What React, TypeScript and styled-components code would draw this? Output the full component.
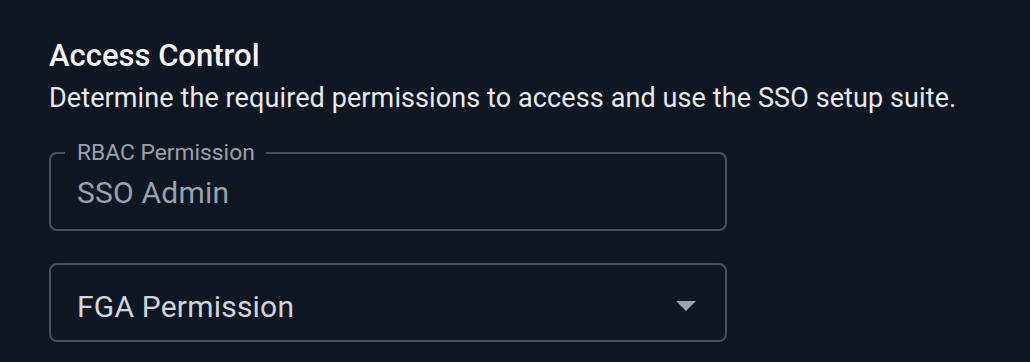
import React from 'react';
import styled, { createGlobalStyle } from 'styled-components';

const GlobalStyle = createGlobalStyle`
  html, body {
    margin: 0;
    padding: 0;
    background: #111722;
  }
  body {
    font-family: Roboto, 'Liberation Sans', sans-serif;
  }
`;

const Page = styled.div`
  width: 1030px;
  height: 362px;
  box-sizing: border-box;
  padding: 38px 0 0 49px;
  background: #111722;
  overflow: hidden;
`;

const Title = styled.h2`
  margin: 0;
  font-size: 31px;
  font-weight: 500;
  line-height: 36px;
  color: #f3f4f6;
`;

const Description = styled.p`
  margin: 7px 0 0;
  font-size: 27px;
  line-height: 34px;
  color: #e8eaee;
  letter-spacing: 0.1px;
`;

const Fields = styled.div`
  display: flex;
  flex-direction: column;
  gap: 32px;
  margin-top: 37px;
  width: 678px;
`;

const Field = styled.div<{ $offset?: number }>`
  position: relative;
  height: 79px;
  box-sizing: border-box;
  border: 2px solid #4a505c;
  border-radius: 8px;
  padding: ${(p) => p.$offset ?? 0}px 29px 0 26px;
  display: flex;
  align-items: center;
  justify-content: space-between;
`;

// floating label sitting on the top border (notched outline)
const Label = styled.span`
  position: absolute;
  top: -13px;
  left: 14px;
  padding: 0 11px 0 12px;
  background: #111722;
  font-size: 22.8px;
  line-height: 24px;
  color: #9aa1ac;
`;

const Value = styled.span<{ $muted?: boolean }>`
  font-size: 30px;
  letter-spacing: 0.2px;
  color: ${(p) => (p.$muted ? '#9aa1ac' : '#d1d5db')};
`;

const Caret = styled.svg`
  width: 20px;
  height: 10px;
  fill: #9ca3af;
`;

export default function App() {
  return (
    <>
      <GlobalStyle />
      <Page>
        <Title>Access Control</Title>
        <Description>
          Determine the required permissions to access and use the SSO setup suite.
        </Description>
        <Fields>
          <Field $offset={2}>
            <Label>RBAC Permission</Label>
            <Value $muted>SSO Admin</Value>
          </Field>
          <Field $offset={7}>
            <Value>FGA Permission</Value>
            <Caret viewBox="0 0 20 10">
              <path d="M0 0 L20 0 L10 10 Z" />
            </Caret>
          </Field>
        </Fields>
      </Page>
    </>
  );
}
